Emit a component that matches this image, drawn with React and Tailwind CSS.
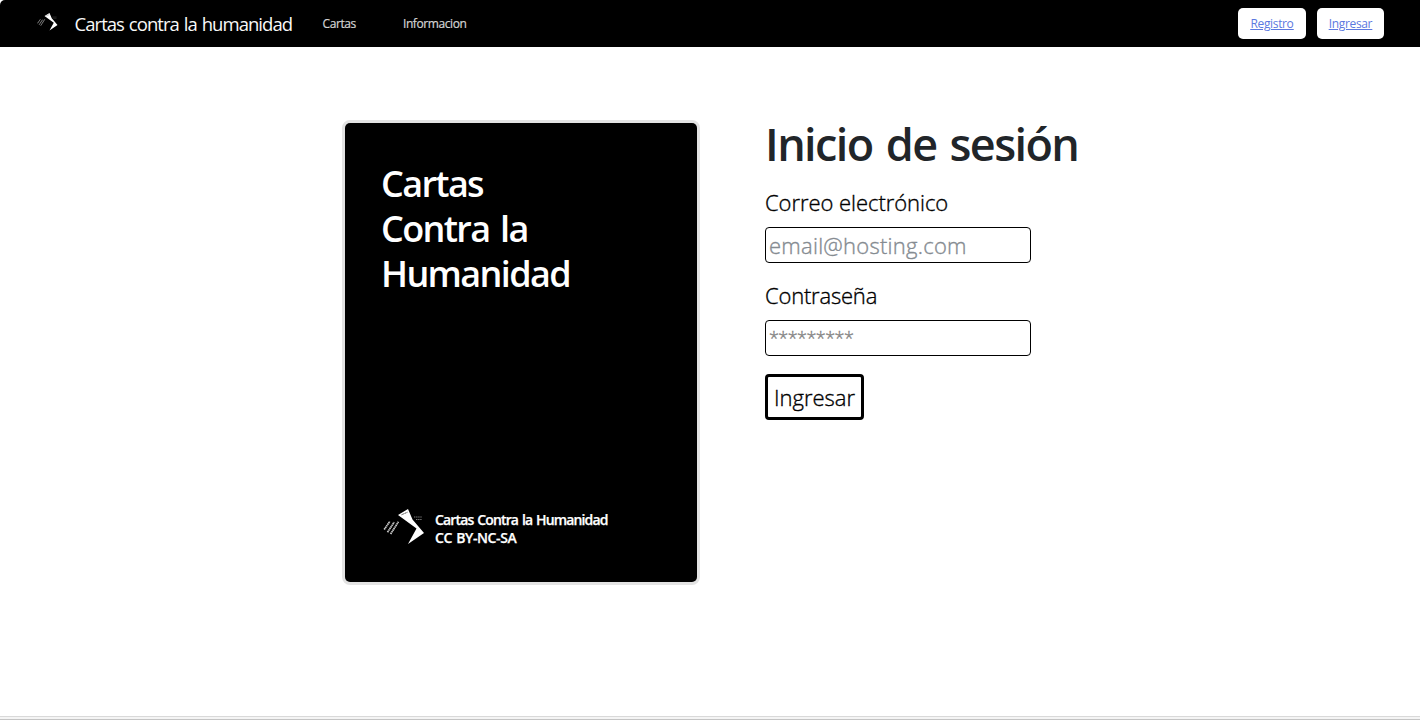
import React from "react";

function Logo({ className }) {
  return (
    <svg viewBox="0 0 42 38" className={className} aria-hidden="true">
      <path d="M15 7 25 1 29.5 11.5 41 25 25 36 33.5 20.5z" fill="#fff" />
      <path d="M18.5 6.8 24.5 4.2" stroke="#444" strokeWidth="0.9" strokeDasharray="1.4 .4" />
      <path d="M31 9h8M33 11.5h6" stroke="#777" strokeWidth="1" strokeDasharray="1.4 .7" />
      <g stroke="#ccc" strokeWidth="1.7" strokeDasharray="1.5 .4">
        <path d="M1.2 21.5 6.8 13.5" />
        <path d="M4.5 24.2 11.2 14.2" />
        <path d="M7.6 26 15.4 13.8" />
      </g>
    </svg>
  );
}

function Navbar() {
  return (
    <nav className="flex h-[47px] items-center rounded-tl-[5px] bg-black pr-[36px] pl-[37px]">
      <Logo className="-mt-[4px] h-[20px] w-[21px]" />
      <a className="ml-[16.5px] w-[248px] text-[18.5px] tracking-[-0.95px] [word-spacing:1px] whitespace-nowrap text-[#f8f8f8]">
        Cartas contra la humanidad
      </a>
      <a className="w-[80.5px] text-[12px] tracking-[-0.4px] text-[#d4d4d4] [-webkit-text-stroke:0.2px]">Cartas</a>
      <a className="text-[12px] tracking-[-0.42px] text-[#d4d4d4] [-webkit-text-stroke:0.2px]">Informacion</a>
      <div className="ml-auto flex gap-[11px] text-[12px] tracking-[-0.35px] text-[#5b78e0] underline">
        <a className="flex h-[31px] w-[68px] items-center justify-center rounded-[5px] bg-white">Registro</a>
        <a className="flex h-[31px] w-[67px] items-center justify-center rounded-[5px] bg-white">Ingresar</a>
      </div>
    </nav>
  );
}

function GameCard() {
  return (
    <div className="flex h-[465px] w-[358px] flex-col rounded-[8px] border-3 border-[#e3e3e3] bg-[#e3e3e3]">
      <div className="flex flex-1 flex-col justify-between rounded-[5px] bg-black pt-[38px] pr-5 pb-[35px] pl-[36px] text-white">
        <h2 className="text-[36px] leading-[45px] font-semibold tracking-[-1.65px] [word-spacing:3px]">
          Cartas
          <br />
          Contra la
          <br />
          Humanidad
        </h2>
        <div className="flex items-center">
          <Logo className="-mt-[5px] ml-[2px] h-[38px] w-[42px]" />
          <p className="ml-[10px] text-[14px] leading-[18px] font-semibold tracking-[-0.85px] [word-spacing:1px] whitespace-nowrap [-webkit-text-stroke:0.25px]">
            Cartas Contra la Humanidad
            <br />
            <span className="tracking-[-0.4px]">CC BY-NC-SA</span>
          </p>
        </div>
      </div>
    </div>
  );
}

function LoginForm() {
  return (
    <form className="flex w-[340px] flex-col items-start text-[22px] font-light text-black [-webkit-text-stroke:0.35px]">
      <h1 className="-mt-[3px] h-[53px] text-[45px] leading-[54px] font-semibold tracking-[-1.6px] [word-spacing:3px] whitespace-nowrap text-[#212529] [-webkit-text-stroke:0px]">
        Inicio de sesión
      </h1>
      <label className="mt-[17px] leading-[30px] tracking-[-0.05px]">Correo electrónico</label>
      <input
        type="email"
        placeholder="email@hosting.com"
        className="mt-[10px] h-[36px] w-[266px] rounded-[4px] border border-black px-[3px] tracking-[0.25px] placeholder:text-[#858b91]"
      />
      <label className="mt-[17px] leading-[30px] tracking-[-0.2px]">Contraseña</label>
      <input
        type="password"
        placeholder="*********"
        className="mt-[10px] h-[36px] w-[266px] rounded-[4px] border border-black px-[3px] text-[18px] tracking-[-0.55px] placeholder:text-[#858585]"
      />
      <button type="button" className="mt-[18px] h-[46px] w-[99px] rounded-[4px] border-3 border-black whitespace-nowrap">
        Ingresar
      </button>
    </form>
  );
}

export default function App() {
  return (
    <div className="flex h-[720px] flex-col bg-white font-['Open_Sans','Noto_Sans',sans-serif]">
      <Navbar />
      <main className="flex flex-1 items-start gap-[65px] pt-[73px] pl-[342px]">
        <GameCard />
        <LoginForm />
      </main>
      <div className="h-[4px] border-t border-b border-t-[#d9d9d9] border-b-[#c4c4c4] bg-[#f4f4f4]" />
    </div>
  );
}
